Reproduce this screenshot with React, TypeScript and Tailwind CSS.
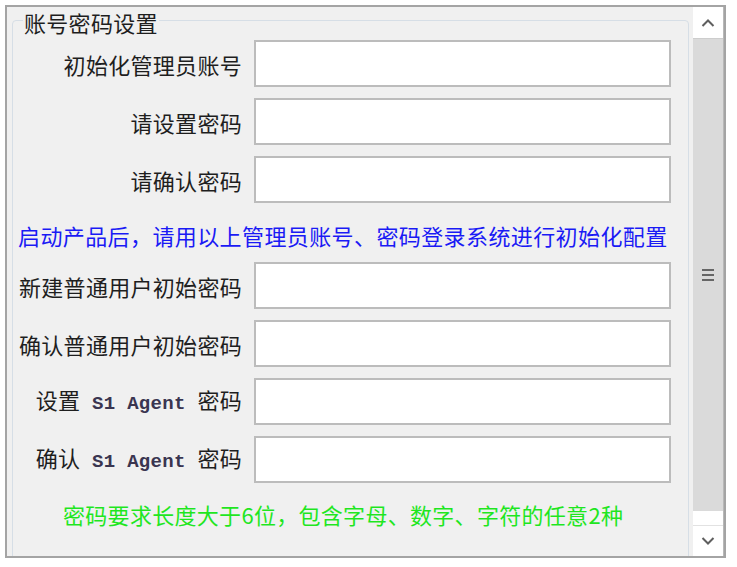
import React from "react";

const cjk = {
  fontFamily: '"Noto Sans CJK SC", "Noto Sans", sans-serif',
};
const mono = {
  fontFamily: '"Liberation Mono", "DejaVu Sans Mono", monospace',
};

function Field({ label }: { label: React.ReactNode }) {
  return (
    <div className="flex items-center h-[47px]">
      <div className="w-[229px] text-right text-[22px] leading-[28px] tracking-[0.3px] text-[#1e1e1e] whitespace-nowrap">
        {label}
      </div>
      <div className="ml-[12px] w-[417px] h-[47px] bg-white border-2 border-[#bcbcbc]" />
    </div>
  );
}

function AgentLabel({ prefix }: { prefix: string }) {
  return (
    <span>
      {prefix}
      <span style={mono} className="text-[19px] font-bold text-[#3a3550]">
        {" S1 Agent "}
      </span>
      密码
    </span>
  );
}

function Chevron({ up }: { up?: boolean }) {
  return (
    <svg width="14" height="8" viewBox="0 0 14 8">
      <path
        d={up ? "M1.5 7 L7 1.5 L12.5 7" : "M1.5 1 L7 6.5 L12.5 1"}
        fill="none"
        stroke="#5f5f5f"
        strokeWidth="2"
      />
    </svg>
  );
}

export default function App() {
  return (
    <div className="w-[737px] h-[567px] bg-white pl-[5px] pt-[5px]" style={cjk}>
      <div className="w-[721px] h-[553px] border-2 border-[#a4a4a4] bg-[#f0f0f0] flex">
        {/* form area */}
        <div className="flex-1 overflow-hidden pl-[5px] pr-[4px] pt-[13px]">
          <div className="relative border border-[#d6dee6] rounded-[4px] h-[600px] pt-[19px]">
            <div className="absolute left-[10px] -top-[11px] px-[1px] bg-[#f0f0f0] text-[22px] leading-[24px] tracking-[0.3px] text-[#1e1e1e]">
              账号密码设置
            </div>
            <div className="flex flex-col gap-[11px]">
              <Field label="初始化管理员账号" />
              <Field label="请设置密码" />
              <Field label="请确认密码" />
            </div>
            <div className="h-[59px] flex items-center pt-[5px] pl-[5px] text-[22px] tracking-[0.4px] text-[#1a1af5] whitespace-nowrap">
              启动产品后，请用以上管理员账号、密码登录系统进行初始化配置
            </div>
            <div className="flex flex-col gap-[11px]">
              <Field label="新建普通用户初始密码" />
              <Field label="确认普通用户初始密码" />
              <Field label={<AgentLabel prefix="设置" />} />
              <Field label={<AgentLabel prefix="确认" />} />
            </div>
            <div className="mt-[16px] pl-[50px] text-[22px] leading-[30px] tracking-[0.3px] text-[#1fe61f] whitespace-nowrap">
              密码要求长度大于6位，包含字母、数字、字符的任意2种
            </div>
          </div>
        </div>

        {/* vertical scrollbar */}
        <div className="w-[31px] bg-white border-r border-[#b8b8b8] flex flex-col">
          <div className="h-[31px] flex items-center justify-center">
            <Chevron up />
          </div>
          <div className="h-[473px] bg-[#dadada] border-t border-[#cdcdcd] flex items-center justify-center">
            <div className="flex flex-col gap-[3px]">
              <div className="w-[12px] h-[2px] bg-[#666666]" />
              <div className="w-[12px] h-[2px] bg-[#666666]" />
              <div className="w-[12px] h-[2px] bg-[#666666]" />
            </div>
          </div>
          <div className="flex-1" />
          <div className="h-[31px] border-t border-[#e2e2e2] flex items-center justify-center">
            <Chevron />
          </div>
        </div>
      </div>
    </div>
  );
}
